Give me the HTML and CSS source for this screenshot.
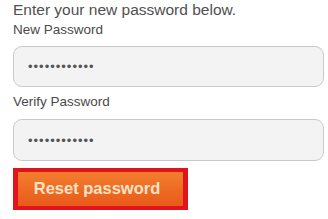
FILE: index.html
```html
<html>
<head>
<meta http-equiv="content-type" content="text/html; charset=UTF-8">
<link rel="stylesheet" href="styles.css">
</head>
<body>
<div class="reset_form_div">
	<div class="reset_words_div">Enter your new password below.</div>
	<label class="reset_label" for="new_pwd">New Password</label>
	<input class="reset_input" type="password" id="new_pwd" value="abcdefghijkl">
	<label class="reset_label" for="verify_pwd">Verify Password</label>
	<input class="reset_input verify_input" type="password" id="verify_pwd" value="abcdefghijkl">
	<div class="reset_btn_div">
		<button class="reset_btn" type="button">Reset password</button>
	</div>
</div>
</body>
</html>
```

FILE: styles.css
```css
body { margin:0; background:#ffffff; font-family:"Liberation Sans", Arial, sans-serif; }
.reset_form_div { padding:1px 4px 0px 13px; display:flex; flex-direction:column; align-items:flex-start; }
.reset_words_div { font-size:15.5px; line-height:18px; color:#505050; }
.reset_label { font-size:13.5px; line-height:16px; color:#4a4a4a; margin-top:3px; }
.reset_input { box-sizing:border-box; width:100%; height:41px; margin-top:8px; padding:0px 14px; border:1px solid #c9c9c9; border-radius:9px; background:#f3f3f3; font-family:"Liberation Sans", Arial, sans-serif; font-size:13px; letter-spacing:1px; color:#555555; outline:none; }
.reset_input + .reset_label { margin-top:7px; }
.verify_input { margin-top:9px; height:42px; }
.reset_btn_div { margin-top:7px; border:4px solid #e1141b; border-right-width:5px; border-left-width:5px; }
.reset_btn { display:block; width:165px; height:34px; margin:0; padding:0 7px 1px 0; border:0; background:linear-gradient(#f37e2f, #e9591a); font-family:"Liberation Sans", Arial, sans-serif; font-size:16.5px; font-weight:bold; color:#fbe3c6; }
```
